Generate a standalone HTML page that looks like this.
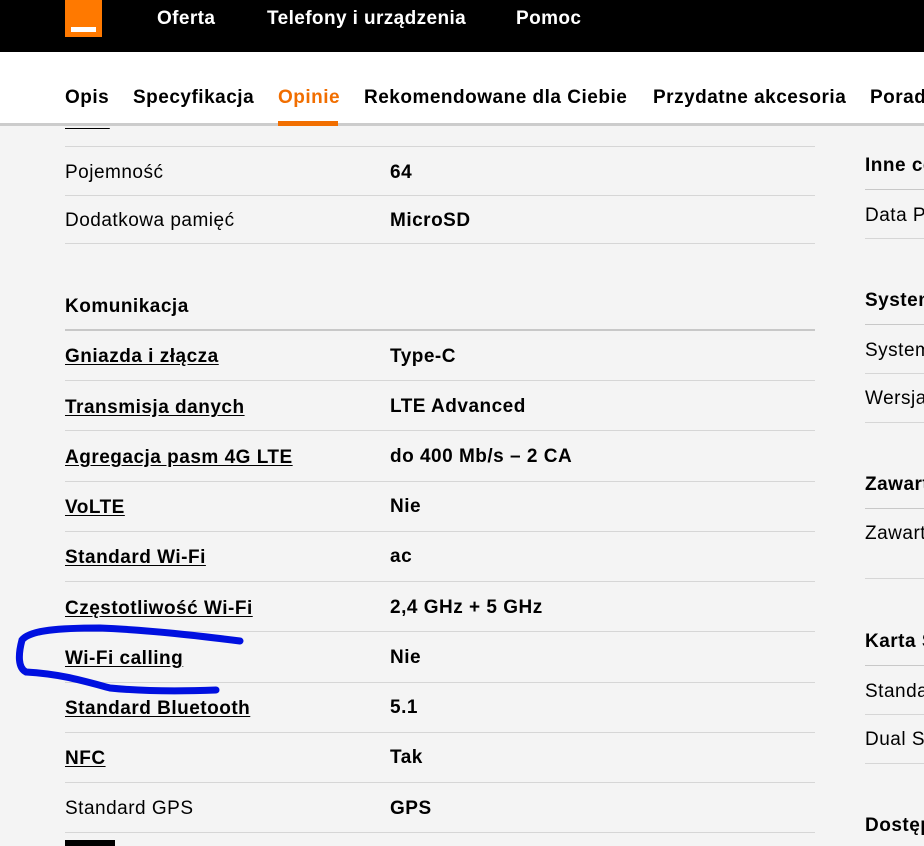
<!DOCTYPE html>
<html><head><meta charset="utf-8"><style>
*{margin:0;padding:0;box-sizing:border-box}
html,body{overflow:hidden}
body{width:924px;height:846px;overflow:hidden;background:#f4f4f4;font-family:"Liberation Sans",Arial,sans-serif;color:#000;position:relative}
.a{position:absolute;white-space:nowrap}
.t{font-size:19px;line-height:20px;letter-spacing:0.5px;transform:translateY(-8px)}
.b{font-weight:bold}
.u{font-weight:bold;text-decoration:underline;text-underline-offset:2px}
.l{position:absolute;height:1px;background:#d6d6d6}
.n{font-size:19px;font-weight:bold;letter-spacing:0.5px}
.r{position:absolute;left:865px;top:0;width:59px;height:846px;overflow:hidden}
.r .a{left:0}
.r .l{left:0;width:59px}
</style></head><body>
<div class="a t u" style="left:65px;top:119px">RAM</div><div class="a t b" style="left:390px;top:119px">4</div>
<div class="a" style="left:0;top:0;width:924px;height:52px;background:#000"></div>
<div class="a" style="left:65px;top:0;width:37px;height:37px;background:#ff7900"></div>
<div class="a" style="left:71px;top:27px;width:25px;height:5px;background:#fff"></div>
<div class="a n" style="left:157px;top:8px;color:#fff;letter-spacing:0.4px">Oferta</div>
<div class="a n" style="left:267px;top:8px;color:#fff;letter-spacing:0.4px">Telefony i urządzenia</div>
<div class="a n" style="left:516px;top:8px;color:#fff;letter-spacing:0.4px">Pomoc</div>
<div class="a" style="left:0;top:52px;width:924px;height:72px;background:#fff"></div>
<div class="a" style="left:0;top:123px;width:924px;height:3px;background:#ccc"></div>
<div class="a n" style="left:65px;top:87px">Opis</div>
<div class="a n" style="left:133px;top:87px">Specyfikacja</div>
<div class="a n" style="left:278px;top:87px;color:#f16e00">Opinie</div>
<div class="a" style="left:278px;top:121px;width:60px;height:5px;background:#f16e00"></div>
<div class="a n" style="left:364px;top:87px">Rekomendowane dla Ciebie</div>
<div class="a n" style="left:653px;top:87px">Przydatne akcesoria</div>
<div class="a n" style="left:870px;top:87px">Porady</div>

<div class="l" style="left:65px;top:146px;width:750px"></div>
<div class="a t" style="left:65px;top:171px">Pojemność</div><div class="a t b" style="left:390px;top:171px">64</div>
<div class="l" style="left:65px;top:195px;width:750px"></div>
<div class="a t" style="left:65px;top:219px">Dodatkowa pamięć</div><div class="a t b" style="left:390px;top:219px">MicroSD</div>
<div class="l" style="left:65px;top:243px;width:750px"></div>
<div class="a t b" style="left:65px;top:305px">Komunikacja</div>
<div class="l" style="left:65px;top:329px;width:750px;height:2px;background:#c8c8c8"></div>
<div class="a t u" style="left:65px;top:355px">Gniazda i złącza</div><div class="a t b" style="left:390px;top:355px">Type-C</div>
<div class="l" style="left:65px;top:380px;width:750px"></div>
<div class="a t u" style="left:65px;top:406px">Transmisja danych</div><div class="a t b" style="left:390px;top:405px">LTE Advanced</div>
<div class="l" style="left:65px;top:430px;width:750px"></div>
<div class="a t u" style="left:65px;top:456px">Agregacja pasm 4G LTE</div><div class="a t b" style="left:390px;top:455px">do 400 Mb/s – 2 CA</div>
<div class="l" style="left:65px;top:481px;width:750px"></div>
<div class="a t u" style="left:65px;top:506px">VoLTE</div><div class="a t b" style="left:390px;top:505px">Nie</div>
<div class="l" style="left:65px;top:531px;width:750px"></div>
<div class="a t u" style="left:65px;top:556px">Standard Wi-Fi</div><div class="a t b" style="left:390px;top:555px">ac</div>
<div class="l" style="left:65px;top:581px;width:750px"></div>
<div class="a t u" style="left:65px;top:607px">Częstotliwość Wi-Fi</div><div class="a t b" style="left:390px;top:606px">2,4 GHz + 5 GHz</div>
<div class="l" style="left:65px;top:631px;width:750px"></div>
<div class="a t u" style="left:65px;top:657px">Wi-Fi calling</div><div class="a t b" style="left:390px;top:656px">Nie</div>
<div class="l" style="left:65px;top:682px;width:750px"></div>
<div class="a t u" style="left:65px;top:707px">Standard Bluetooth</div><div class="a t b" style="left:390px;top:706px">5.1</div>
<div class="l" style="left:65px;top:732px;width:750px"></div>
<div class="a t u" style="left:65px;top:757px">NFC</div><div class="a t b" style="left:390px;top:756px">Tak</div>
<div class="l" style="left:65px;top:782px;width:750px"></div>
<div class="a t" style="left:65px;top:807px">Standard GPS</div><div class="a t b" style="left:390px;top:807px">GPS</div>
<div class="l" style="left:65px;top:832px;width:750px"></div>
<div class="a" style="left:65px;top:840px;width:50px;height:6px;background:#000"></div>

<div class="r">
<div class="a t b" style="top:164px">Inne cechy</div>
<div class="l" style="top:189px;background:#c8c8c8"></div>
<div class="a t" style="top:214px">Data Premiery</div>
<div class="l" style="top:238px"></div>
<div class="a t b" style="top:299px">System</div>
<div class="l" style="top:324px;background:#c8c8c8"></div>
<div class="a t" style="top:349px">System operacyjny</div>
<div class="l" style="top:373px"></div>
<div class="a t" style="top:397px">Wersja</div>
<div class="l" style="top:422px"></div>
<div class="a t b" style="top:483px">Zawartość</div>
<div class="l" style="top:508px;background:#c8c8c8"></div>
<div class="a t" style="top:532px">Zawartość</div>
<div class="l" style="top:578px"></div>
<div class="a t b" style="top:640px">Karta SIM</div>
<div class="l" style="top:665px;background:#c8c8c8"></div>
<div class="a t" style="top:690px">Standard</div>
<div class="l" style="top:714px"></div>
<div class="a t" style="top:738px">Dual SIM</div>
<div class="l" style="top:763px"></div>
<div class="a t b" style="top:824px">Dostępność</div>
</div>

<svg class="a" style="left:0;top:0" width="924" height="846"><path d="M240 641 C200 636 150 630 100 628 C60 628 30 630 22 640 C18 655 18 668 26 672 C60 674 80 680 110 688 C150 692 190 691 216 690" fill="none" stroke="#0010e0" stroke-width="7" stroke-linecap="round"/></svg>
</body></html>
